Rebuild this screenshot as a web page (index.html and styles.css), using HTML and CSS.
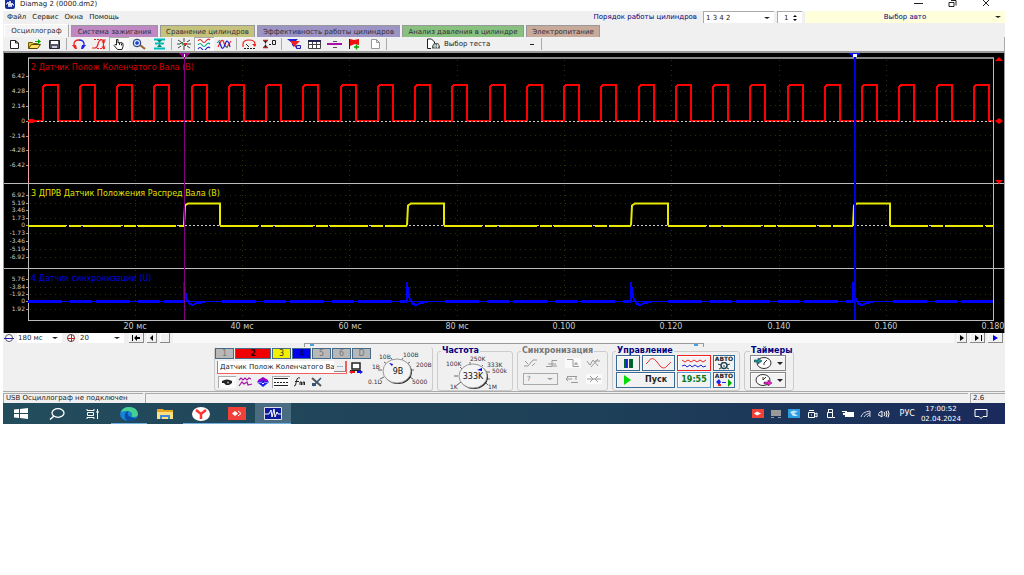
FILE: index.html
```html
<!DOCTYPE html>
<html lang="ru">
<head>
<meta charset="utf-8">
<title>Diamag 2 (0000.dm2)</title>
<link rel="stylesheet" href="styles.css">
</head>
<body>
<div class="window">
  <header class="titlebar">
    <svg class="app-icon" width="10" height="9" viewBox="0 0 10 9"><path fill="#1b2f9a" d="M0 0h10v7q0 2-2 2H2Q0 9 0 7z"/><path fill="none" stroke="#fff" d="M1 4h1l1-2 1 5 1-6 1 6 1-4 1 2h1"/></svg>
    <span class="title">Diamag 2 (0000.dm2)</span>
    <div class="win-buttons">
      <button type="button" aria-label="Свернуть"><svg width="9" height="8" viewBox="0 0 9 8"><path stroke="#222" d="M0 3.500h9"/></svg></button>
      <button type="button" aria-label="Восстановить"><svg width="9" height="8" viewBox="0 0 9 8"><path fill="none" stroke="#222" d="M1 2.500h5v4H1zM3 .5h5v5"/></svg></button>
      <button type="button" aria-label="Закрыть"><svg width="9" height="8" viewBox="0 0 9 8"><path stroke="#222" d="M1 0l6 6M7 0L1 6"/></svg></button>
    </div>
  </header>

  <div class="menubar">
    <nav class="menu"><a href="#">Файл</a><a href="#">Сервис</a><a href="#">Окна</a><a href="#">Помощь</a></nav>
    <div class="order">
      <label for="order">Порядок работы цилиндров</label>
      <span class="pick order-pick"><select id="order"><option>1 3 4 2</option></select></span>
      <span class="spin"><input type="text" value="1" aria-label="Цилиндр"><svg width="6" height="8" viewBox="0 0 6 8"><path d="M1 3l2-2 2 2zM1 5h4L3 7z"/></svg></span>
      <button type="button" class="auto-pick"><span>Выбор авто</span></button>
    </div>
  </div>

  <nav class="tabs">
    <button type="button" class="tab current">Осциллограф</button>
    <button type="button" class="tab pink">Система зажигания</button>
    <button type="button" class="tab olive">Сравнение цилиндров</button>
    <button type="button" class="tab violet">Эффективность работы цилиндров</button>
    <button type="button" class="tab green">Анализ давления в цилиндре</button>
    <button type="button" class="tab tan">Электропитание</button>
  </nav>

  <div class="toolbar">
    <div class="tools">
      <button type="button" aria-label="Новый"><svg viewBox="0 0 16 12"><path fill="#fff" stroke="#222" d="M4.500 2.500h5l3 2.500v5.500h-8zM9.500 2.500V5h3"/></svg></button>
      <button type="button" aria-label="Открыть"><svg viewBox="0 0 16 12"><path fill="#e8c020" stroke="#6a5a10" d="M2.500 10V4.500h4l1 1h4V7"/><path fill="#ffe060" stroke="#554400" d="M2.500 10.500l3-4h9l-3 4z"/><path fill="#0a0" d="M9 3h3V1l3 2.500L12 6V4H9z"/></svg></button>
      <button type="button" aria-label="Сохранить"><svg viewBox="0 0 16 12"><path fill="#556" stroke="#223" d="M3.500 2.500h10v8h-10z"/><path fill="#fff" d="M5 3h7v3H5z"/><path fill="#ccd" d="M6 8h5v2H6z"/></svg></button>
    </div>
    <div class="tools">
      <button type="button" aria-label="Влево и вправо"><svg viewBox="0 0 16 12"><path fill="none" stroke="#e22" stroke-width="1.300" d="M3 8V6q0-4 5-4"/><path fill="none" stroke="#22e" stroke-width="1.300" d="M13 8V6q0-4-5-4"/><path fill="#e22" d="M1 7l4 0 1 4H4z"/><path fill="#22e" d="M15 7h-4l-1 4h2z"/></svg></button>
      <button type="button" aria-label="Масштаб сигнала"><svg viewBox="0 0 16 12"><path fill="none" stroke="#e22" stroke-width="1.200" d="M1 10h3q2 0 3-4t3-4h5M12.500 3v7M11 8.500l1.500 2 1.500-2M11 4.500l1.500-2 1.500 2"/><path stroke="#e22" stroke-dasharray="2 1" d="M3 1.500h8M6 10.500h9"/></svg></button>
      <button type="button" class="pressed" aria-label="Рука"><svg viewBox="0 0 16 12"><path fill="#fff" stroke="#222" d="M5.500 7V1.500h1.500V5l1-.5 1 .5 1-.5 1 .5 1 .5v3l-1 3H6.500L3 7.500 4 6.500zM8.500 5v2M10.500 5.500v2"/></svg></button>
      <button type="button" aria-label="Лупа"><svg viewBox="0 0 16 12"><path stroke="#963" stroke-width="2.200" d="M9 7l5 4"/><circle cx="6" cy="5" r="3.800" fill="#bdf" stroke="#236"/><path stroke="#00c" d="M4 5h4M6 3v4"/></svg></button>
      <button type="button" aria-label="Сжать"><svg viewBox="0 0 16 12"><path stroke="#0bb" stroke-width="2" d="M3 1.500h11M4 5.500h9M3 10.500h11"/><path fill="#086" d="M6 2h5L8.500 5zM6 9h5L8.500 6z"/></svg></button>
    </div>
    <div class="tools">
      <button type="button" aria-label="Центр"><svg viewBox="0 0 16 12"><path fill="none" stroke="#444" d="M1 6h3l2-2 3 4 2-2h4M8 0v4M8 12V8M2 2l3 2M14 2l-3 2M2 10l3-2M14 10l-3-2"/><path fill="#3a4" d="M5 5h4L7 8z"/><path fill="#c33" d="M8 5h3v2H8z"/></svg></button>
      <button type="button" class="pressed" aria-label="Раздельно"><svg viewBox="0 0 16 12"><path fill="none" stroke="#e22" stroke-width="1.200" d="M2 3q2-3 4 0t4 0 4-1"/><path fill="none" stroke="#0a8" stroke-width="1.200" d="M2 7q2-3 4 0t4 0 4-1"/><path fill="none" stroke="#22c" stroke-width="1.200" d="M2 11q2-3 4 0t4 0 4-1"/></svg></button>
      <button type="button" aria-label="Вместе"><svg viewBox="0 0 16 12"><path fill="none" stroke="#e22" stroke-width="1.200" d="M2 9l3-6q2-2 3 2t3 4l4-6"/><path fill="none" stroke="#22c" stroke-width="1.200" d="M2 3q2 1 3 5t3 1l2-5q2-3 4 5"/><path fill="none" stroke="#0a8" d="M1 5l3-3M9 8l3 2"/></svg></button>
    </div>
    <div class="tools">
      <button type="button" aria-label="Круг"><svg viewBox="0 0 16 12"><path fill="none" stroke="#e22" stroke-width="1.200" d="M2 9V6q0-4 6-4t6 4v2"/><path stroke="#222" stroke-dasharray="2 1" d="M3 10.500h11"/><path fill="#e22" d="M11 6h4l-1 3z"/><path stroke="#333" d="M5 6l3 3"/></svg></button>
      <button type="button" aria-label="Нуль"><svg viewBox="0 0 16 12"><path stroke="#b22" stroke-width="1.500" d="M2 2.500h5M2 9.500h5"/><path fill="#222" d="M3 3h3L4.500 6 6 9H3l1.500-3z"/><path fill="none" stroke="#222" d="M11.500 2.500h3v4h-3zM8 6.500h2"/></svg></button>
    </div>
    <div class="tools">
      <button type="button" aria-label="Фильтр"><svg viewBox="0 0 16 12"><path fill="#22d" d="M1 1h11L8 5v4L6 7V5z"/><path fill="#e22" d="M4 3h10l-4 4v3L8 8z"/><path fill="#cce" stroke="#22a" d="M10.500 7.500h4v3h-4z"/></svg></button>
      <button type="button" aria-label="Таблица"><svg viewBox="0 0 16 12"><path fill="#fff" stroke="#444" d="M2.500 2.500h12v8h-12zM6.500 3v8M10.500 3v8M2 6.500h13"/><path stroke="#225" stroke-width="2" d="M2 3h13"/></svg></button>
      <button type="button" aria-label="Линия"><svg viewBox="0 0 16 12"><path stroke="#a1a" stroke-width="2" d="M1 6h15"/><path stroke="#555" d="M7 3.500h4M7 9.500h4"/></svg></button>
      <button type="button" aria-label="Флаг"><svg viewBox="0 0 16 12"><path stroke="#222" d="M3.500 1v10"/><path fill="#e11" d="M4 1l4 1 5-1v6L9 6 4 8z"/><path stroke="#0a0" stroke-width="1.500" d="M8 9h5M10.500 6.500v5"/></svg></button>
      <button type="button" aria-label="Лист"><svg viewBox="0 0 16 12"><path fill="#fff" stroke="#999" d="M5.500 1.500h5l3 3v6h-8zM10.500 1.500v3h3"/></svg></button>
    </div>
    <div class="tools test">
      <button type="button" class="test-pick"><svg viewBox="0 0 16 12" width="16" height="12"><path fill="#fff" stroke="#222" d="M6 10.500H2.500V1h4l3 3v2"/><path fill="#565" d="M7 10.500V8l2-3h4l2 3v2.500z"/><path stroke="#dde" d="M8 8h6M10 6v4M12.500 6v4"/></svg><span>Выбор теста</span><i></i></button>
    </div>
  </div>

  <svg class="scope" viewBox="3 53 1002 280" role="img" aria-label="Осциллограмма">
    <defs>
      <path id="spike" d="M0 301v-19l1 9 2 9 3 4 3 1 4-2 8-1"/>
    </defs>
    <path fill="#000" d="M3 53h1002v280H3z"/>
    <path class="frame-line" d="M3.500 53V333M1004.500 53V333"/>
    <path class="grid" d="M135.500 60V320M242.500 60V320M349.500 60V320M457.500 60V320M564.500 60V320M671.500 60V320M779.500 60V320M886.500 60V320"/>
    <path class="grid" d="M30 91.500H992M30 105.500H992M30 135.500H992M30 150.500H992M30 165.500H992M30 195.500H992M30 203.500H992M30 218.500H992M30 233.500H992M30 249.500H992M30 257.500H992M30 287.500H992M30 294.500H992M30 309.500H992"/>
    <path stroke="#888" stroke-width="2" d="M28 58h966"/>
    <path class="axis" d="M28.500 58v263M28 320.500h966M993.500 58v263M4 183.500h1000M4 268.500h1000"/>
    <path stroke="#f8a0a0" d="M28.500 123v60"/>
    <path class="zero" d="M29 121.500H993M29 225.500H993"/>
    <path class="ticks" d="M26 76.500h2M26 91.500h2M26 106.500h2M26 121.500h2M26 136.500h2M26 150.500h2M26 165.500h2M26 195.500h2M26 203.500h2M26 210.500h2M26 218.500h2M26 225.500h2M26 233.500h2M26 241.500h2M26 249.500h2M26 257.500h2M26 279.500h2M26 287.500h2M26 294.500h2M26 301.500h2M26 309.500h2"/>
    <g class="y-labels">
      <text x="25" y="78">6.42</text><text x="25" y="93">4.28</text><text x="25" y="108">2.14</text><text x="25" y="123">0</text><text x="25" y="138">-2.14</text><text x="25" y="152">-4.28</text><text x="25" y="167">-6.42</text>
      <text x="25" y="197">6.92</text><text x="25" y="205">5.19</text><text x="25" y="212">3.46</text><text x="25" y="220">1.73</text><text x="25" y="227">0</text><text x="25" y="235">-1.73</text><text x="25" y="243">-3.46</text><text x="25" y="251">-5.19</text><text x="25" y="259">-6.92</text>
      <text x="25" y="281">5.76</text><text x="25" y="289">-3.84</text><text x="25" y="296">-1.92</text><text x="25" y="303">0</text><text x="25" y="311">1.92</text>
    </g>
    <g class="x-labels">
      <text x="135" y="329">20 мс</text><text x="242" y="329">40 мс</text><text x="350" y="329">60 мс</text><text x="457" y="329">80 мс</text><text x="564" y="329">0.100</text><text x="671" y="329">0.120</text><text x="779" y="329">0.140</text><text x="886" y="329">0.160</text><text x="993" y="329">0.180</text>
    </g>
    <g class="names">
      <text x="31" y="70" fill="#d80000">2 Датчик Полож Коленчатого Вала (В)</text>
      <text x="31" y="196" fill="#e0e000">3 ДПРВ Датчик Положения Распред Вала (В)</text>
      <text x="31" y="281" fill="#0000e0">4 Датчик синхронизации (U)</text>
    </g>
    <path class="red" d="M28 121h15v-34l2-2h13v36h22v-34l2-2h13v36h22v-34l2-2h13v36h22v-34l2-2h13v36h23v-34l2-2h13v36h22v-34l2-2h13v36h22v-34l2-2h13v36h22v-34l2-2h13v36h23v-34l2-2h13v36h22v-34l2-2h13v36h22v-34l2-2h13v36h22v-34l2-2h13v36h23v-34l2-2h13v36h22v-34l2-2h13v36h22v-34l2-2h13v36h22v-34l2-2h13v36h23v-34l2-2h13v36h22v-34l2-2h13v36h22v-34l2-2h13v36h22v-34l2-2h13v36h23v-34l2-2h13v36h22v-34l2-2h13v36h22v-34l2-2h13v36h22v-34l2-2h13v36h23v-34l2-2h13v36h22v-34l2-2h13v36h4"/>
    <path fill="none" stroke="#e8e800" d="M28 225.500H184M220 225.500H407M444 225.500H631M668 225.500H853M890 225.500H993" stroke-width="2" stroke-dasharray="38 3 12 2"/>
    <path class="yellow" d="M184 225.500l1-20 3-2h32v22M407 225.500l1-20 3-2h33v22M631 225.500l1-20 3-2h33v22M853 225.500l1-20 3-2h33v22"/>
    <path class="zero" d="M29 121.500H993"/>
    <path stroke="#00f" d="M28 301.500H993"/>
    <path stroke="#00f" stroke-width="3" stroke-dasharray="34 8 22 4" d="M28 301.500H184M222 301.500H407M445 301.500H631M668 301.500H853M893 301.500H993"/>
    <g fill="none" stroke="#00f" stroke-width="2"><use href="#spike" x="184"/><use href="#spike" x="407"/><use href="#spike" x="631"/><use href="#spike" x="853"/></g>
    <path stroke="#800080" d="M184.500 54v266"/><path fill="#900090" d="M179 53h11l-3 4h-5z"/><path stroke="#fff" d="M184.500 54v3"/>
    <path fill="#0000e0" d="M854 54h1.500v266H854z"/><path fill="#00f" d="M849 53h11l-3 4h-5z"/><path fill="#fff" d="M853 54h4v3h-4z"/>
    <path class="marks" d="M29 119h4l3 2-3 2h-4zM995 61l4-4 4 4zM995 121l4-3 4 3-4 3zM995 180h8l-4 4z"/>
  </svg>

  <div class="scrollrow">
    <svg width="10" height="10" viewBox="0 0 10 10"><circle cx="5" cy="5" r="3.500" fill="#fff" stroke="#556"/><path stroke="#22a" d="M0 5.500h10"/></svg>
    <span class="pick range"><select aria-label="Длительность"><option>180 мс</option></select></span>
    <svg width="10" height="10" viewBox="0 0 10 10"><circle cx="5" cy="5" r="3.500" fill="#fff" stroke="#633"/><path stroke="#c22" d="M2 5.500h7M5.500 2v7"/></svg>
    <span class="pick range"><select aria-label="Масштаб"><option>20</option></select></span>
    <button type="button" class="wide first" aria-label="В начало"><svg width="9" height="6" viewBox="0 0 9 6"><path d="M0 0h1v6H0zM2 3l3-3v6zM5 2h3v2H5z"/></svg></button>
    <button type="button" aria-label="Назад"><svg width="4" height="6" viewBox="0 0 4 6"><path d="M0 3l3-3v6z"/></svg></button>
    <button type="button" aria-label="Ползунок"></button>
    <div class="track"></div>
    <button type="button" aria-label="Вперёд"><svg width="4" height="6" viewBox="0 0 4 6"><path d="M4 3L0 0v6z"/></svg></button>
    <button type="button" class="wide" aria-label="В конец"><svg width="8" height="6" viewBox="0 0 8 6"><path d="M7 0h1v6H7zM5 3L1 0v6z"/></svg></button>
    <button type="button" class="wide" aria-label="Воспроизвести"><svg width="6" height="6" viewBox="0 0 6 6"><path fill="#00e" d="M5 3L0 0v6z"/></svg></button>
  </div>

  <main class="panel">
    <div class="splitter"><i></i><i></i></div>
    <div class="groups">
      <section class="group channels">
        <div class="channel-side">
          <div class="channel-row">
            <button type="button">1</button><button type="button" class="c2">2</button><button type="button" class="c3">3</button><button type="button" class="c4">4</button><button type="button">5</button><button type="button">6</button><button type="button">D</button>
          </div>
          <div class="sensor-row">
            <div class="sensor"><input type="text" aria-label="Датчик" value="Датчик Полож Коленчатого Вала"><button type="button">···</button></div>
            <svg width="14" height="12" viewBox="0 0 14 12"><path fill="#fff" stroke="#222" stroke-width="1.500" d="M3 1h8v6H3z"/><path stroke="#222" d="M1 8.500h11"/><path fill="#e11" d="M0 10l3-2v4zM3 9h3v2H3z"/><path fill="#11e" d="M14 10l-3-2v4zM8 9h3v2H8z"/></svg>
          </div>
          <div class="mini-row">
            <button type="button" class="pressed" aria-label="Показать"><svg viewBox="0 0 16 10"><path fill="#222" d="M3 4q5-3 10 0v2l-3 2H7L5 6H3z"/><circle cx="9" cy="5.500" r="1" fill="#aaa"/></svg></button>
            <button type="button" aria-label="Сглаживание"><svg viewBox="0 0 16 10"><path fill="none" stroke="#a1a" stroke-width="1.200" d="M2 3l2-2 2 2 2-2 2 2 2-2 2 1M2 9l3-4 2 2 3-2 1 3 4-1"/></svg></button>
            <button type="button" aria-label="Сдвиг"><svg viewBox="0 0 16 10"><path fill="#90c" d="M8 0l5 3v2H3V3z"/><path fill="#22e" d="M8 10l5-4H3zM7 3h2v4H7z"/><path stroke="#22e" d="M2 5h12"/></svg></button>
            <button type="button" class="pressed" aria-label="Линии"><svg viewBox="0 0 16 10"><path stroke="#222" d="M1 1.500h14M1 8.500h14"/><path stroke="#222" stroke-dasharray="2 1" d="M1 5.500h14"/></svg></button>
            <button type="button" aria-label="Функция"><svg viewBox="0 0 16 10"><path fill="none" stroke="#222" d="M3 9q2 0 2-3l1-4q1-2 3-1M4 4.500h4M9 8V5l1.500 0V8M12 8V5h1.500v3"/></svg></button>
            <button type="button" aria-label="Настройка"><svg viewBox="0 0 16 10"><path stroke="#555" stroke-width="2" d="M3 1l9 8"/><path stroke="#357" stroke-width="1.600" d="M12 1L4 9"/><path fill="#357" d="M3 6h4v3H3z"/></svg></button>
          </div>
        </div>
        <svg class="knob" width="66" height="40" viewBox="366 353 66 40">
          <g class="knob-ticks"><path d="M379 383l4-2M377 374h4M383 366l3 2M390 362l2 3M402 362l-2 3M409 366l-3 2M413 374h-4M412 383l-3-2"/></g>
          <ellipse cx="397" cy="376" rx="14" ry="12" fill="#222"/><ellipse cx="396" cy="375" rx="14" ry="12" fill="#f4f4f4" stroke="#999"/>
          <path fill="#00e" d="M388 367l4 1-1 2z"/>
          <g class="knob-labels"><text x="378" y="363">10В</text><text x="402" y="361">100В</text><text x="415" y="371">200В</text><text x="411" y="388">5000</text><text x="367" y="388">0.1D</text><text x="371" y="373">1В</text></g>
          <text class="knob-value" x="397" y="378">9В</text>
        </svg>
      </section>

      <fieldset class="group freq">
        <legend>Частота</legend>
        <svg class="knob" width="70" height="36" viewBox="441 354 70 36">
          <g class="knob-ticks"><path d="M457 384l4-3M454 375h4M460 366l3 3M470 361v3M483 364l-3 3M490 371h-4M490 378h-4M488 384l-3-3"/></g>
          <ellipse cx="474" cy="376" rx="14" ry="12" fill="#222"/><ellipse cx="473" cy="375" rx="14" ry="12" fill="#f4f4f4" stroke="#999"/>
          <path fill="#00e" d="M477 369l5-2v3z"/>
          <g class="knob-labels"><text x="446" y="365">100K</text><text x="470" y="360">250K</text><text x="487" y="366">333K</text><text x="492" y="372">500k</text><text x="450" y="388">1K</text><text x="488" y="388">1M</text></g>
          <text class="knob-value" x="473" y="378">333K</text>
        </svg>
      </fieldset>

      <fieldset class="group sync">
        <legend>Синхронизация</legend>
        <div class="sync-row">
          <svg viewBox="0 0 16 10"><path d="M1 8h4l5-6h4M2 3l3 3M12 5l-3 3"/></svg>
          <svg viewBox="0 0 16 10"><path d="M2 8.500h6v-6h5M4 6h8M8 8h5"/></svg>
          <svg class="lit" viewBox="0 0 16 10"><path d="M2 1.500h6v7h6M11 4v3M9 6h4"/></svg>
          <svg viewBox="0 0 16 10"><path d="M1 3l3 4 3-5 5 6M12 1L5 9M9 3h5"/></svg>
        </div>
        <div class="sync-row">
          <span class="pick ghost"><select aria-label="Канал синхронизации"><option>?</option></select></span>
          <svg viewBox="0 0 16 10"><path d="M3 2.500h10M2 5h6M7 8.500h7M4 3l-2 2 2 2M12 3v3"/></svg>
          <svg class="lit" viewBox="0 0 16 10"><path d="M1 5h14M4 2l3 3-3 3M12 2L9 5l3 3"/></svg>
        </div>
      </fieldset>

      <fieldset class="group control">
        <legend>Управление</legend>
        <div class="control-grid">
          <button type="button" class="key" aria-label="Пауза"><svg width="9" height="9" viewBox="0 0 9 9"><path fill="#063" d="M0 0h4v9H0zM5 0h4v9H5z"/><path fill="#22c" d="M2 0h1v9H2zM7 0h1v9H7z"/></svg></button>
          <button type="button" class="key" aria-label="Синус"><svg width="28" height="12" viewBox="0 0 28 12"><path fill="none" stroke="#e33" d="M1 7l2-2q4-7 9 0l3 4q4 4 7 0l4-4"/></svg></button>
          <button type="button" class="key alert" aria-label="Каналы"><svg width="26" height="11" viewBox="0 0 26 11"><path fill="none" stroke="#e22" d="M1 2l3 2 3-2 3 2 3-2 3 2 3-2 3 2 3-2"/><path fill="none" stroke="#22d" d="M1 8l3-1 2 2 3-2 2 2 3-2 3 2 3-2 2 2 3-1"/></svg></button>
          <button type="button" class="key auto"><span>АВТО</span><svg width="14" height="8" viewBox="0 0 14 8"><circle cx="7" cy="3.500" r="3" fill="none" stroke="#245" stroke-width="1.500"/><path stroke="#245" d="M1 2l3 1M13 2l-3 1M7 3v2M2 7l2-1M12 7l-2-1"/></svg></button>
          <button type="button" class="key start"><svg width="7" height="10" viewBox="0 0 7 10"><path fill="#0d0" d="M0 0l7 5-7 5z"/></svg><span>Пуск</span></button>
          <button type="button" class="key time">19:55</button>
          <button type="button" class="key auto"><span>АВТО</span><svg width="16" height="8" viewBox="0 0 16 8"><path fill="#22e" d="M0 3l3-3 2 3-2 3z"/><path fill="#e22" d="M2 5h3v2H2z"/><path stroke="#22e" d="M6 3.500h4"/><path fill="#0a0" d="M12 0l4 4-4 4z"/></svg></button>
        </div>
      </fieldset>

      <fieldset class="group timers">
        <legend>Таймеры</legend>
        <button type="button" class="key gray" aria-label="Таймер старта"><svg width="18" height="12" viewBox="0 0 18 12"><ellipse cx="10" cy="6" rx="7" ry="5.500" fill="#fff" stroke="#333"/><path fill="none" stroke="#333" d="M10 6l3-3M10 6v2"/><path fill="#299" stroke="#123" stroke-width=".5" d="M0 3h4V1l4 3-4 3V5H0z"/></svg><i></i></button>
        <button type="button" class="key gray" aria-label="Таймер останова"><svg width="18" height="12" viewBox="0 0 18 12"><ellipse cx="9" cy="6" rx="7" ry="5.500" fill="#fff" stroke="#333"/><path fill="none" stroke="#333" d="M9 6l3-3M9 6V3"/><path fill="#e2c" stroke="#313" stroke-width=".5" d="M10 8h4V6l4 3-4 3v-2h-4z"/></svg><i></i></button>
      </fieldset>
    </div>
  </main>

  <footer class="status"><span class="msg">USB Осциллограф не подключен</span><span class="fill"></span><span class="ver">2.6</span></footer>

  <div class="taskbar">
    <div class="tasks">
      <button type="button" aria-label="Пуск"><svg width="14" height="11" viewBox="0 0 14 11"><path fill="#fff" d="M0 1.500l5-.5v4H0zM6 1l8-1v5H6zM0 6h5v4l-5-.5zM6 6h8v5l-8-1z"/></svg></button>
      <button type="button" aria-label="Поиск"><svg width="16" height="12" viewBox="0 0 16 12"><ellipse cx="9" cy="5" rx="6" ry="4.300" fill="none" stroke="#fff" stroke-width="1.300"/><path stroke="#fff" stroke-width="1.500" d="M5 8l-4 3.500"/></svg></button>
      <button type="button" aria-label="Представление задач"><svg width="14" height="10" viewBox="0 0 14 10"><path fill="none" stroke="#fff" d="M1 0v1.500h7V0M1.500 3.500h6v3h-6zM1 10V8.500h7V10M11.500 0v10M10 3h3"/></svg></button>
      <button type="button" class="open" aria-label="Edge"><svg width="18" height="14" viewBox="0 0 18 14"><ellipse cx="9" cy="7" rx="9" ry="7" fill="#1583d8"/><path fill="#48d090" d="M1 5Q3 0 9 0q8 0 9 7 0 3-4 3-3 0-2-2 1-3-4-4-5 0-7 1z"/><path fill="#0b4da0" d="M5 7q1-3 4-3-2 2-1 4 2 3 8 3-3 4-8 3-4-2-3-7z"/></svg></button>
      <button type="button" aria-label="Проводник"><svg width="16" height="12" viewBox="0 0 16 12"><path fill="#e8a820" d="M0 1h6l1 1h9v9H0z"/><path fill="#ffe080" d="M0 4h16v7H0z"/><path fill="#3a8ad8" d="M3 7h10v4h-2V9H5v2H3z"/></svg></button>
      <button type="button" class="open" aria-label="Яндекс"><svg width="18" height="14" viewBox="0 0 18 14"><ellipse cx="9" cy="7" rx="9" ry="7" fill="#fff"/><path fill="none" stroke="#f33" stroke-width="2.500" d="M4 3l5 4 5-4M9 6v6"/></svg></button>
      <button type="button" class="open" aria-label="AnyDesk"><svg width="18" height="13" viewBox="0 0 18 13"><path fill="#f04038" d="M0 0h18v13H0z"/><path fill="#fff" d="M4 6.500l3-2.500 3 2.500L7 9z"/><path fill="none" stroke="#fff" d="M10 4l3 2.500L10 9"/></svg></button>
      <button type="button" class="open active" aria-label="Diamag"><svg width="18" height="13" viewBox="0 0 18 13"><path fill="#0a1a98" stroke="#dde" d="M.5.500h17v12H.5z"/><path fill="none" stroke="#fff" d="M1 7h4l2-4 1 7 2-8 1 8 2-5 1 2h3"/></svg></button>
    </div>
    <div class="tray">
      <svg viewBox="0 0 12 10"><path fill="#f04038" d="M0 0h12v9H0z"/><path fill="#fff" d="M2 4.500l3-2 4 2-4 2z"/></svg>
      <svg viewBox="0 0 12 10"><path fill="#999" d="M1 1h10v6H1zM1 8h3v1H1zM8 8h3v1H8z"/></svg>
      <svg viewBox="0 0 12 10"><path fill="#2a9ce0" d="M0 0h12v9H0z"/><path fill="#bde4f8" d="M2 3q4-3 8 0L6 4l4 3H5z"/></svg>
      <svg viewBox="0 0 12 10"><path fill="none" stroke="#fff" d="M3 1.500h5M2.500 3.500h6v5h-6zM9 5l2-1v4L9 7M5 6h1"/></svg>
      <svg viewBox="0 0 12 10"><path fill="none" stroke="#fff" d="M4.500.5h4v3M3.500 3.500h5v5h-5zM4.500 3V0M9 8.500h2"/></svg>
      <svg viewBox="0 0 12 10"><path fill="#fff" d="M3 3h9v5H3zM0 2h5v1H0zM1 4h3v2H1z"/></svg>
      <svg viewBox="0 0 12 10"><path fill="none" stroke="#ccd" d="M1 8q1-5 9-6M4 8q1-3 6-4M7 8q1-2 3-2M10 2v6"/></svg>
      <svg viewBox="0 0 12 10"><path fill="none" stroke="#fff" d="M0 4v2h1l3 2V2L1 4M6 3l1 2-1 2M8 2l1 3-1 3M10 1.500q2 3 0 7"/></svg>
      <span class="lang">РУС</span>
      <time>17:00:52<br>02.04.2024</time>
      <svg class="note" viewBox="0 0 14 10"><path fill="none" stroke="#fff" d="M1 .5h12v7H9l-2 2-2-2H1z"/></svg>
    </div>
  </div>
</div>
</body>
</html>
```
FILE: styles.css
```css
* { box-sizing: border-box; }
body { margin: 0; background: #fff; color: #222; font: 7px/10px "DejaVu Sans", sans-serif; }
button, input, select { font: inherit; color: inherit; margin: 0; padding: 0; border: 0; background: none; border-radius: 0; }
select { appearance: none; width: 100%; height: 100%; }
button { display: flex; align-items: center; justify-content: center; }
a { color: inherit; text-decoration: none; }
svg { display: block; flex: none; }
.window { margin: 0 19px 0 3px; background: #f0f0f0; }

.titlebar { display: flex; align-items: flex-start; height: 11px; background: #fff; }
.app-icon { margin: 0 5px 0 2px; }
.title { flex: 1; line-height: 9px; }
.win-buttons { display: flex; gap: 25px; padding-right: 14px; }

.menubar { display: flex; justify-content: space-between; height: 13px; }
.menu { display: flex; gap: 6px; padding: 1px 0 0 4px; }
.order { display: flex; color: #000080; height: 12px; }
.order label { margin-right: 6px; line-height: 12px; }
.pick { display: block; position: relative; background: #fff; }
.pick::after, .auto-pick::after { content: ""; position: absolute; right: 4px; top: 5px; border: 3px solid transparent; border-top: 2px solid #222; border-bottom: 0; }
.order-pick { width: 71px; margin-right: 3px; border: 1px solid #aaa; border-width: 1px 0 0 1px; color: #222; }
.order-pick select { padding-left: 2px; }
.spin { display: flex; align-items: center; width: 25px; margin-right: 3px; background: #fff; border: 1px solid #aaa; border-width: 1px 0 0 1px; color: #222; }
.spin input { width: 14px; padding-left: 6px; }
.auto-pick { position: relative; width: 200px; background: #ffffdc; color: #000080; }

.tabs { display: flex; gap: 2px; height: 13px; padding-left: 1px; }
.tab { height: 12px; margin-top: 1px; padding: 0 5px; color: #332c38; border: 1px solid #999; border-bottom: 0; white-space: nowrap; }
.current { width: 65px; height: 13px; margin-top: 0; background: #f4f4f4; border-color: #fff #aaa #fff #fff; }
.pink { width: 87px; background: #c088c2; }
.olive { width: 95px; background: #c4c27c; }
.violet { width: 143px; background: #9c94c4; }
.green { width: 122px; background: #88c080; }
.tan { width: 74px; background: #c8aa9a; }

.toolbar { display: flex; height: 16px; padding: 0 0 0 1px; border-bottom: 2px solid #999; border-right: 1px solid #aaa; }
.tools { display: flex; height: 14px; align-items: center; padding-right: 5px; background: linear-gradient(#aaa, #aaa) right 2px top 1px / 1px 12px no-repeat; }
.tools button { width: 20px; height: 14px; }
.tools svg { width: 16px; height: 12px; }
.pressed { background: #fafafa; box-shadow: inset 1px 1px #aaa; }
.tools .test-pick { width: 150px; justify-content: flex-start; padding-left: 36px; gap: 3px; }
.test-pick i { margin-left: auto; margin-right: 5px; width: 4px; height: 1px; background: #222; }

.scope { width: 100%; height: auto; font-family: "DejaVu Sans", sans-serif; }
.scope path { shape-rendering: crispEdges; }
.frame-line { stroke: #999; }
.grid { stroke: #2c3010; stroke-dasharray: 1 4; }
.axis { stroke: #bbb; fill: none; }
.zero { stroke: #ccc; stroke-dasharray: 2 2; }
.ticks { stroke: #999; }
.red { fill: none; stroke: #f00; stroke-width: 2; }
.yellow { fill: none; stroke: #e8e800; stroke-width: 2; }
.marks { fill: #f00; }
.scope .yellow, .scope .marks { shape-rendering: auto; }
.y-labels { font-size: 6px; fill: #ccc; text-anchor: end; }
.x-labels { font-size: 8px; fill: #ccc; text-anchor: middle; }
.names { font-size: 8px; }

.scrollrow { display: flex; height: 10px; gap: 3px; padding: 0 2px 0 1px; }
.range { width: 45px; }
.range select { padding-left: 1px; }
.range::after { top: 4px; }
.scrollrow button { width: 10px; height: 10px; background: #f0f0f0; box-shadow: inset -1px -1px #888, inset 1px 1px #fff; }
.scrollrow .wide { width: 15px; }
.scrollrow .first { margin-left: 2px; }
.range + svg { margin-left: 1px; }
.track { flex: 1; background: #f8f8f8; }

.panel { display: flex; flex-direction: column; align-items: center; height: 49px; border-bottom: 1px solid #aaa; }
.splitter { display: flex; justify-content: space-between; width: 400px; height: 4px; padding: 0 5px; border: 1px solid #999; border-width: 1px 1px 0; }
.splitter i { width: 4px; height: 2px; background: #48a0e0; }
.groups { display: flex; gap: 4px; height: 44px; color: #222; }
.group { min-width: 0; margin: 0; padding: 0 3px; border: 1px solid #ccc; border-radius: 3px; }
legend { padding: 0 1px; font-weight: bold; font-size: 8px; line-height: 8px; color: #000080; }

.channels { display: flex; width: 219px; padding: 0; border-top: 0; }
.channel-side { width: 152px; }
.channel-row { display: flex; gap: 1px; height: 11px; margin-top: 1px; }
.channel-row button { width: 19px; height: 11px; flex: none; background: #b8b8b8; border: 1px solid #456a8a; color: #777; font-size: 8px; }
.channel-row .c2 { width: 36px; background: #f00000; color: #300; font-weight: bold; }
.channel-row .c3 { background: #f0f000; color: #333; }
.channel-row .c4 { background: #0000f0; color: #003; }
.sensor-row { display: flex; align-items: center; gap: 2px; margin-top: 2px; padding-left: 2px; }
.sensor { display: flex; width: 130px; height: 13px; border: 1px solid #f06060; border-top: 0; background: #fff; }
.sensor input { flex: 1; min-width: 0; padding-left: 2px; }
.sensor button { width: 12px; height: 11px; background: #f0f0f0; box-shadow: inset -1px -1px #888; }
.mini-row { display: flex; margin-top: 2px; padding-left: 3px; }
.mini-row button { width: 18px; height: 12px; }
.mini-row svg { width: 16px; height: 10px; }
.knob { margin-top: 2px; overflow: visible; }
.freq .knob { margin-top: 0; }
.knob-ticks { stroke: #666; }
.knob-labels { font-size: 6px; fill: #334; }
.knob-value { font-size: 8px; text-anchor: middle; fill: #111; }

.freq { width: 76px; }
.sync { width: 91px; }
.sync legend { color: #777; }
.sync-row { display: flex; justify-content: space-between; align-items: center; height: 16px; padding: 0 2px; }
.sync-row svg { width: 16px; height: 10px; fill: none; stroke: #999; }
.sync-row .lit { background: #fafafa; }
.ghost { width: 35px; height: 12px; background: #f0f0f0; border: 1px solid #aaa; color: #777; }
.ghost select { padding-left: 3px; }
.ghost::after { top: 4px; border-top-color: #999; }

.control { width: 128px; }
.control-grid { display: grid; grid-template-columns: 24px 33px 34px 22px; column-gap: 2px; row-gap: 1px; }
.key { height: 16px; border: 1px solid #3a6a94; background: #f2f2f2; box-shadow: inset 1px 1px #fff; }
.key.alert { border-color: #f02020; }
.key.auto { flex-direction: column; font-size: 6px; line-height: 6px; font-weight: bold; }
.start { grid-column: span 2; justify-content: flex-start; gap: 14px; padding-left: 7px; font-size: 8px; font-weight: bold; }
.time { color: #087818; font-size: 8px; font-weight: bold; border-color: #5a9ad0; }

.timers { width: 50px; padding: 0 5px; }
.timers .key { width: 36px; margin-bottom: 1px; gap: 5px; border-color: #888; }
.timers i { border: 3px solid transparent; border-top: 3px solid #222; border-bottom: 0; }

.status { display: flex; gap: 2px; height: 11px; margin-top: 0; padding-top: 1px; }
.status span { border: 1px solid #aaa; border-width: 1px 0 0 1px; line-height: 9px; padding-left: 2px; white-space: nowrap; }
.msg { width: 140px; }
.fill { flex: 1; }
.ver { width: 35px; }

.taskbar { display: flex; justify-content: space-between; height: 21px; color: #fff; background: linear-gradient(90deg, #234c5c, #1e4058 60%, #1a2a5c); }
.tasks { display: flex; }
.tasks button { width: 36px; height: 21px; }
.open { box-shadow: inset 0 -1px #70b0e0; }
.tasks .active { background: #4a6c80; }
.tray { display: flex; align-items: center; gap: 6px; padding-right: 17px; }
.tray svg { width: 12px; height: 10px; }
.tray .lang { margin: 0 0 0 4px; font-size: 8px; }
.tray time { text-align: center; }
.tray .note { width: 14px; margin-left: 7px; }
```
